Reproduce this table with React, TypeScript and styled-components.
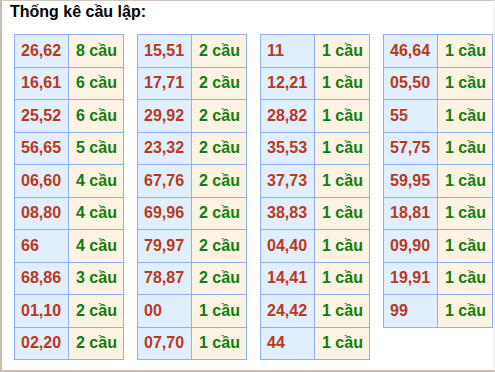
import styled, { createGlobalStyle } from 'styled-components';

const GlobalStyle = createGlobalStyle`
    html, body {
        margin: 0;
        padding: 0;
        background: #ffffff;
    }
`;

type Entry = [string, number];

const columns: Entry[][] = [
    [['26,62', 8], ['16,61', 6], ['25,52', 6], ['56,65', 5], ['06,60', 4], ['08,80', 4], ['66', 4], ['68,86', 3], ['01,10', 2], ['02,20', 2]],
    [['15,51', 2], ['17,71', 2], ['29,92', 2], ['23,32', 2], ['67,76', 2], ['69,96', 2], ['79,97', 2], ['78,87', 2], ['00', 1], ['07,70', 1]],
    [['11', 1], ['12,21', 1], ['28,82', 1], ['35,53', 1], ['37,73', 1], ['38,83', 1], ['04,40', 1], ['14,41', 1], ['24,42', 1], ['44', 1]],
    [['46,64', 1], ['05,50', 1], ['55', 1], ['57,75', 1], ['59,95', 1], ['18,81', 1], ['09,90', 1], ['19,91', 1], ['99', 1]],
];

export default function App(){
    return (
        <>
            <GlobalStyle />
            <Frame>
                <Title>Thống kê cầu lập:</Title>
                <Tables>
                    {columns.map((col, i) => (
                        <Table key={i}>
                            {col.map(([pair, count]) => (
                                <Row key={pair}>
                                    <PairCell>{pair}</PairCell>
                                    <CountCell>{count} cầu</CountCell>
                                </Row>
                            ))}
                        </Table>
                    ))}
                </Tables>
            </Frame>
        </>
    );
}

const Frame = styled.div`
    box-sizing: border-box;
    width: 495px;
    height: 372px;
    border-top: 1px solid #cfc7bc;
    border-left: 2px solid #c8bfb3;
    border-bottom: 2px solid #c8bfb3;
    border-right: 1px solid #ececec;
    padding: 2px 0 0 7px;
    font-family: 'Liberation Sans', Arial, sans-serif;
`;

const Title = styled.div`
    font-size: 16px;
    font-weight: bold;
    color: #000000;
    line-height: 18px;
    margin-left: 1px;
`;

const Tables = styled.div`
    display: flex;
    align-items: flex-start;
    gap: 13px;
    margin-top: 13px;
    margin-left: 5px;
`;

const Table = styled.div`
    display: grid;
    grid-template-columns: 54px 55px;
    grid-auto-rows: 32.5px;
    border-top: 1px solid #8eaef0;
    border-left: 1px solid #8eaef0;
`;

const Row = styled.div`
    display: contents;
`;

const Cell = styled.div`
    box-sizing: border-box;
    display: flex;
    align-items: center;
    border-right: 1px solid #8eaef0;
    border-bottom: 1px solid #8eaef0;
    font-size: 16px;
    font-weight: bold;
    white-space: nowrap;
`;

const PairCell = styled(Cell)`
    background: #e1eefe;
    color: #b8391c;
    padding-left: 6px;
`;

const CountCell = styled(Cell)`
    background: #fdf3e2;
    color: #127d12;
    padding-left: 7px;
`;
